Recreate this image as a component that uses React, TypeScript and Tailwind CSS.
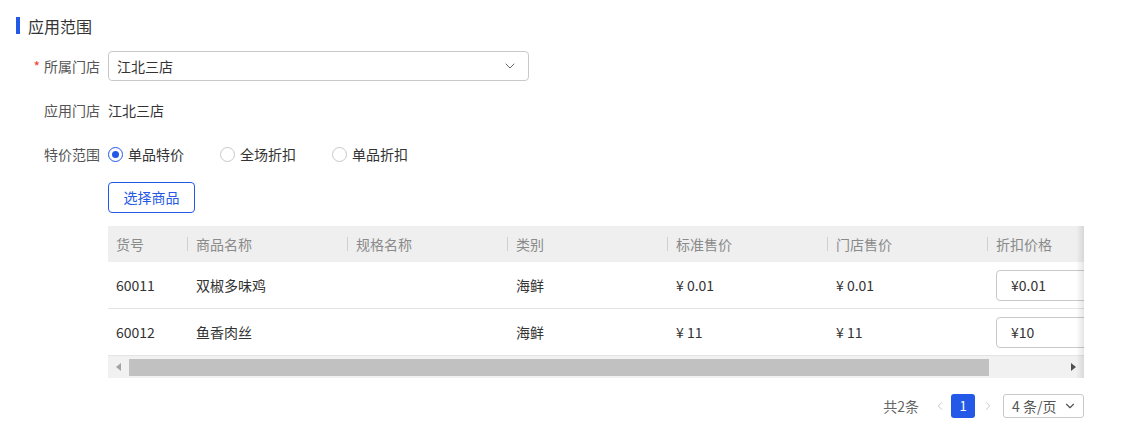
import { ChevronDown, ChevronLeft, ChevronRight } from 'lucide-react';

const font = { fontFamily: '"Noto Sans CJK SC", "Noto Sans", sans-serif' };

const columns = [
  { title: '货号', width: 'w-[80px]' },
  { title: '商品名称', width: 'w-[160px]' },
  { title: '规格名称', width: 'w-[160px]' },
  { title: '类别', width: 'w-[160px]' },
  { title: '标准售价', width: 'w-[160px]' },
  { title: '门店售价', width: 'w-[160px]' },
  { title: '折扣价格', width: 'w-[160px]' },
];

const rows = [
  { code: '60011', name: '双椒多味鸡', spec: '', type: '海鲜', std: '¥ 0.01', store: '¥ 0.01', discount: '¥0.01' },
  { code: '60012', name: '鱼香肉丝', spec: '', type: '海鲜', std: '¥ 11', store: '¥ 11', discount: '¥10' },
];

const Radio = ({ label, checked }: { label: string; checked?: boolean }) => (
  <div className="flex items-center w-[112px]">
    <span
      className={`w-[15px] h-[15px] rounded-full border flex items-center justify-center ${
        checked ? 'border-[#2458e6]' : 'border-[#c8c8c8]'
      }`}
    >
      {checked && <span className="w-[7px] h-[7px] rounded-full bg-[#2458e6]" />}
    </span>
    <span className="ml-[5px] text-[14px] text-[#333]">{label}</span>
  </div>
);

const FormRow = ({ label, required, children }: { label: string; required?: boolean; children: React.ReactNode }) => (
  <div className="flex items-center">
    <div className="w-[100px] text-right text-[14px] text-[#555] shrink-0">
      {required && <span className="text-[#f04134] mr-[4px]">*</span>}
      {label}
    </div>
    <div className="ml-[8px] flex items-center">{children}</div>
  </div>
);

export default function App() {
  return (
    <div className="w-[1143px] h-[442px] bg-white overflow-hidden" style={font}>
      <div className="flex items-center pt-[17px] pl-[16px] h-[34px]">
        <span className="w-[4px] h-[17px] bg-[#2458e6]" />
        <span className="ml-[8px] text-[16px] text-[#333] leading-none">应用范围</span>
      </div>

      <div className="mt-[17px]">
        <FormRow label="所属门店" required>
          <div className="w-[421px] h-[30px] border border-[#c9c9c9] rounded-[4px] flex items-center justify-between pl-[8px] pr-[10px]">
            <span className="text-[14px] text-[#333]">江北三店</span>
            <ChevronDown className="w-[16px] h-[16px] text-[#666]" strokeWidth={1.5} />
          </div>
        </FormRow>
      </div>

      <div className="mt-[14px] h-[30px] flex items-center">
        <FormRow label="应用门店">
          <span className="text-[14px] text-[#333]">江北三店</span>
        </FormRow>
      </div>

      <div className="mt-[14px] h-[30px] flex items-center">
        <FormRow label="特价范围">
          <Radio label="单品特价" checked />
          <Radio label="全场折扣" />
          <Radio label="单品折扣" />
        </FormRow>
      </div>

      <div className="mt-[13px] ml-[108px]">
        <button className="w-[87px] h-[31px] border border-[#2458e6] rounded-[4px] text-[14px] text-[#2458e6] bg-white">
          选择商品
        </button>
      </div>

      <div className="mt-[13px] ml-[108px] w-[976px] relative overflow-hidden">
        <div className="w-[1100px]">
          <div className="flex h-[36px] bg-[#efefef] items-center">
            {columns.map((c, i) => (
              <div key={c.title} className={`${c.width} shrink-0 flex items-center`}>
                {i > 0 && <span className="w-px h-[14px] bg-[#cfcfcf] -ml-px" />}
                <span className="pl-[8px] text-[14px] text-[#8a8a8a]">{c.title}</span>
              </div>
            ))}
          </div>
          {rows.map((r) => (
            <div key={r.code} className="flex h-[47px] items-center border-b border-[#e4e4e4] text-[14px] text-[#333]">
              <div className="w-[80px] shrink-0 pl-[8px]">{r.code}</div>
              <div className="w-[160px] shrink-0 pl-[8px]">{r.name}</div>
              <div className="w-[160px] shrink-0 pl-[8px]">{r.spec}</div>
              <div className="w-[160px] shrink-0 pl-[8px]">{r.type}</div>
              <div className="w-[160px] shrink-0 pl-[8px]">{r.std}</div>
              <div className="w-[160px] shrink-0 pl-[8px]">{r.store}</div>
              <div className="w-[160px] shrink-0 pl-[8px]">
                <div className="w-[130px] h-[31px] border border-[#c9c9c9] rounded-[4px] flex items-center pl-[14px]">
                  {r.discount}
                </div>
              </div>
            </div>
          ))}
        </div>

        <div className="h-[22px] bg-[#f1f1f1] flex items-center">
          <div className="w-[21px] h-full flex items-center justify-center">
            <span className="w-0 h-0 border-y-[4px] border-y-transparent border-r-[5px] border-r-[#a3a3a3]" />
          </div>
          <div className="w-[860px] h-[17px] bg-[#c1c1c1]" />
          <div className="flex-1 h-full flex items-center justify-end pr-[8px]">
            <span className="w-0 h-0 border-y-[4px] border-y-transparent border-l-[5px] border-l-[#505050]" />
          </div>
        </div>

        <div className="absolute top-0 right-0 w-[8px] h-full bg-gradient-to-r from-transparent to-black/10" />
      </div>

      <div className="mt-[16px] w-[1084px] flex justify-end items-center h-[24px] text-[14px]">
        <span className="text-[#666]">共2条</span>
        <ChevronLeft className="ml-[14px] w-[14px] h-[14px] text-[#c0c0c0]" strokeWidth={1.5} />
        <span className="ml-[4px] w-[24px] h-[24px] rounded-[3px] bg-[#2458e6] text-white flex items-center justify-center text-[13px]">
          1
        </span>
        <ChevronRight className="ml-[6px] w-[14px] h-[14px] text-[#c0c0c0]" strokeWidth={1.5} />
        <div className="ml-[8px] w-[81px] h-[24px] border border-[#c9c9c9] rounded-[3px] flex items-center justify-between pl-[8px] pr-[6px] text-[#555]">
          <span>4 条/页</span>
          <ChevronDown className="w-[14px] h-[14px] text-[#555]" strokeWidth={2} />
        </div>
      </div>
    </div>
  );
}
